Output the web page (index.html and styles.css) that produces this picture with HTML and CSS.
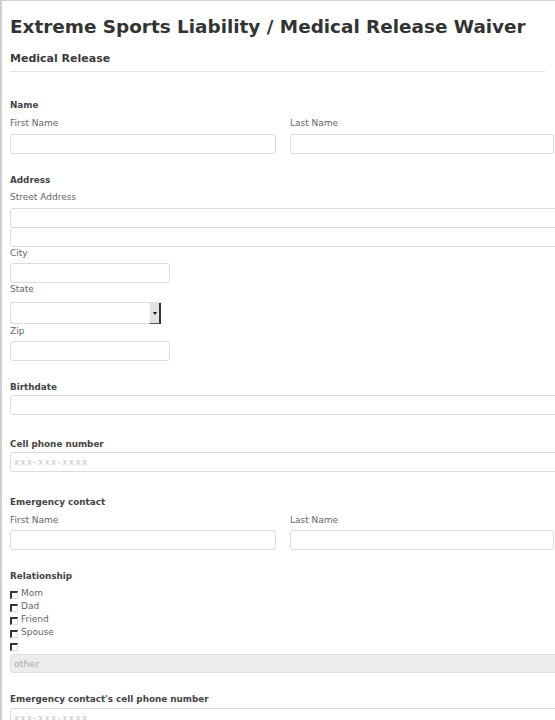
FILE: index.html
```
<!DOCTYPE html>
<html>
<head>
<meta charset="utf-8">
<link rel="stylesheet" href="styles.css">
</head>
<body>
<div class="frame">
  <h1 class="title">Extreme Sports Liability / Medical Release Waiver</h1>
  <h2 class="section">Medical Release</h2>

  <div class="gl m27">Name</div>
  <div class="cols m6">
    <div class="col">
      <div class="sub">First Name</div>
      <div class="inp m5"></div>
    </div>
    <div class="col">
      <div class="sub">Last Name</div>
      <div class="inp m5"></div>
    </div>
  </div>

  <div class="gl m20">Address</div>
  <div class="sub m5">Street Address</div>
  <div class="inp full m5"></div>
  <div class="inp full stack"></div>
  <div class="sub">City</div>
  <div class="inp short m4"></div>
  <div class="sub">State</div>
  <div class="select m7"><span class="sel-btn"><span class="tri"></span></span></div>
  <div class="sub m1">Zip</div>
  <div class="inp short m4"></div>

  <div class="gl m20">Birthdate</div>
  <div class="inp full m2"></div>

  <div class="gl m23">Cell phone number</div>
  <div class="inp full m2"><span class="ph">xxx-xxx-xxxx</span></div>

  <div class="gl m24">Emergency contact</div>
  <div class="cols m6">
    <div class="col">
      <div class="sub">First Name</div>
      <div class="inp m4"></div>
    </div>
    <div class="col">
      <div class="sub">Last Name</div>
      <div class="inp m4"></div>
    </div>
  </div>

  <div class="gl m20">Relationship</div>
  <ul class="checks m5">
    <li><span class="cb"></span>Mom</li>
    <li><span class="cb"></span>Dad</li>
    <li><span class="cb"></span>Friend</li>
    <li><span class="cb"></span>Spouse</li>
    <li><span class="cb"></span></li>
  </ul>
  <div class="inp full other m2"><span class="ph-other">other</span></div>

  <div class="gl m20">Emergency contact's cell phone number</div>
  <div class="inp full m3"><span class="ph">xxx-xxx-xxxx</span></div>
</div>
</body>
</html>
```
FILE: styles.css
```
html, body {
  margin: 0;
  padding: 0;
  background: #fff;
  overflow: hidden;
}
body {
  width: 555px;
  height: 720px;
  font-family: "DejaVu Sans", sans-serif;
}
.frame {
  border-top: 1px solid #cfcfcf;
  border-left: 2px solid #cfcfcf;
  padding-left: 8px;
  height: 720px;
  box-sizing: border-box;
  width: 600px;
}
.title {
  margin: 14px 0 0 0;
  font-size: 18.4px;
  line-height: 24px;
  font-weight: bold;
  color: #333;
  white-space: nowrap;
}
.section {
  margin: 12px 0 0 0;
  width: 535px;
  font-size: 11px;
  line-height: 16px;
  font-weight: bold;
  color: #3a3a3a;
  padding-bottom: 4px;
  border-bottom: 1px solid #e4e4e4;
}
.gl {
  font-size: 8.8px;
  line-height: 12px;
  font-weight: bold;
  color: #444;
}
.sub {
  font-size: 9px;
  line-height: 12px;
  color: #666;
}
.m1 { margin-top: 1px; }
.m2 { margin-top: 2px; }
.m3 { margin-top: 3px; }
.m4 { margin-top: 4px; }
.m5 { margin-top: 5px; }
.m6 { margin-top: 6px; }
.m7 { margin-top: 7px; }
.m20 { margin-top: 20px; }
.m23 { margin-top: 23px; }
.m24 { margin-top: 24px; }
.m27 { margin-top: 27px; }

.cols {
  display: grid;
  grid-template-columns: 266px 264px;
  column-gap: 14px;
}
.inp {
  height: 20px;
  box-sizing: border-box;
  border: 1px solid #dcdcdc;
  border-radius: 3px;
  background: #fff;
  display: flex;
  align-items: center;
  padding-left: 3px;
}
.full { width: 570px; }
.stack { margin-top: -1px; }
.short { width: 160px; }
.ph {
  font-size: 8px;
  color: #c4c4c4;
  letter-spacing: 1.8px;
}
.other {
  height: 19px;
  background: #ececec;
  border-color: #dedede;
}
.ph-other {
  font-size: 9.5px;
  color: #aaa;
}
.select {
  width: 151px;
  height: 22px;
  box-sizing: border-box;
  border: 1px solid #dcdcdc;
  border-right: none;
  border-radius: 3px 0 0 3px;
  display: flex;
  justify-content: flex-end;
}
.sel-btn {
  width: 12px;
  height: 21px;
  box-sizing: border-box;
  background: #e4e2de;
  border-left: 1px solid #f4f4f4;
  border-right: 2px solid #333;
  border-bottom: 1px solid #555;
  display: flex;
  align-items: center;
  justify-content: center;
}
.tri {
  width: 0;
  height: 0;
  border-left: 2.5px solid transparent;
  border-right: 2.5px solid transparent;
  border-top: 3px solid #111;
  margin-top: 1px;
}
.checks {
  list-style: none;
  margin-bottom: 0;
  padding: 0;
}
.checks li {
  height: 13px;
  font-size: 9px;
  line-height: 13px;
  color: #666;
  display: flex;
  align-items: center;
}
.cb {
  width: 8px;
  height: 8px;
  box-sizing: border-box;
  border-top: 2px solid #333;
  border-left: 2px solid #333;
  border-right: 1px solid #ddd;
  border-bottom: 1px solid #ddd;
  margin-right: 3px;
  margin-top: 3px;
}
```
